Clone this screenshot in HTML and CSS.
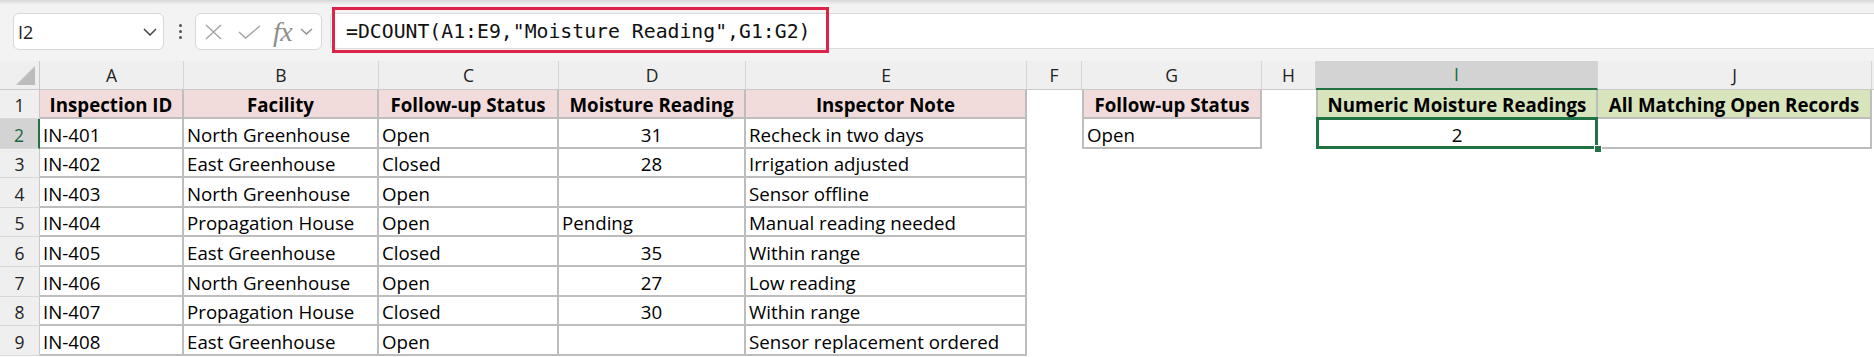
FILE: index.html
```html
<!DOCTYPE html>
<html lang="en">
  <head>
    <meta charset="UTF-8" />
    <meta name="viewport" content="width=device-width, initial-scale=1.0" />
    <title>Inspection log</title>
    <link rel="stylesheet" href="styles.css">
  </head>
  <body>
    <div class="toolbar">
      <div class="nameBox">
        <span>I2</span>
        <svg width="14" height="8" viewBox="0 0 14 8"><polyline points="1,1 7,7 13,1" fill="none" stroke="#444" stroke-width="1.5" /></svg>
      </div>
      <div class="dots"><i></i><i></i><i></i></div>
      <div class="fxBox">
        <svg class="cancel" width="17" height="16" viewBox="0 0 17 16"><path d="M1 1 L16 15 M16 1 L1 15" stroke="#a3a3a3" stroke-width="1.4" /></svg>
        <svg class="enter" width="23" height="14" viewBox="0 0 23 14"><polyline points="1,7 7.5,13 22,1" fill="none" stroke="#a3a3a3" stroke-width="1.4" /></svg>
        <span class="fx">fx</span>
        <svg width="13" height="7" viewBox="0 0 13 7"><polyline points="1,1 6.5,6 12,1" fill="none" stroke="#8f8f8f" stroke-width="1.4" /></svg>
      </div>
      <div class="formula">
        <span>=DCOUNT(A1:E9,"Moisture Reading",G1:G2)</span>
        <div class="callout"></div>
      </div>
    </div>

    <div class="sheet">
      <div class="corner"><svg width="40" height="29" viewBox="0 0 40 29"><polygon points="35,5 35,24 16,24" fill="#bcbcbc" /></svg></div>
      <div class="ch">A</div>
      <div class="ch">B</div>
      <div class="ch">C</div>
      <div class="ch">D</div>
      <div class="ch">E</div>
      <div class="ch">F</div>
      <div class="ch">G</div>
      <div class="ch">H</div>
      <div class="ch sel">I</div>
      <div class="ch">J</div>
      <div class="ch last"></div>

      <div class="rh">1</div>
      <div class="c b hd">Inspection ID</div>
      <div class="c b hd">Facility</div>
      <div class="c b hd">Follow-up Status</div>
      <div class="c b hd">Moisture Reading</div>
      <div class="c b hd">Inspector Note</div>
      <div class="c"></div>
      <div class="c b bl hd">Follow-up Status</div>
      <div class="c"></div>
      <div class="c b bl hd green">Numeric Moisture Readings</div>
      <div class="c b hd green">All Matching Open Records</div>
      <div class="c"></div>

      <div class="rh sel">2</div>
      <div class="c b">IN-401</div>
      <div class="c b">North Greenhouse</div>
      <div class="c b">Open</div>
      <div class="c b num">31</div>
      <div class="c b">Recheck in two days</div>
      <div class="c"></div>
      <div class="c b bl">Open</div>
      <div class="c"></div>
      <div class="c b bl num active">2</div>
      <div class="c b"></div>
      <div class="c"></div>

      <div class="rh">3</div>
      <div class="c b">IN-402</div>
      <div class="c b">East Greenhouse</div>
      <div class="c b">Closed</div>
      <div class="c b num">28</div>
      <div class="c b">Irrigation adjusted</div>
      <div class="c"></div><div class="c"></div><div class="c"></div><div class="c"></div><div class="c"></div><div class="c"></div>

      <div class="rh">4</div>
      <div class="c b">IN-403</div>
      <div class="c b">North Greenhouse</div>
      <div class="c b">Open</div>
      <div class="c b num"></div>
      <div class="c b">Sensor offline</div>
      <div class="c"></div><div class="c"></div><div class="c"></div><div class="c"></div><div class="c"></div><div class="c"></div>

      <div class="rh">5</div>
      <div class="c b">IN-404</div>
      <div class="c b">Propagation House</div>
      <div class="c b">Open</div>
      <div class="c b">Pending</div>
      <div class="c b">Manual reading needed</div>
      <div class="c"></div><div class="c"></div><div class="c"></div><div class="c"></div><div class="c"></div><div class="c"></div>

      <div class="rh">6</div>
      <div class="c b">IN-405</div>
      <div class="c b">East Greenhouse</div>
      <div class="c b">Closed</div>
      <div class="c b num">35</div>
      <div class="c b">Within range</div>
      <div class="c"></div><div class="c"></div><div class="c"></div><div class="c"></div><div class="c"></div><div class="c"></div>

      <div class="rh">7</div>
      <div class="c b">IN-406</div>
      <div class="c b">North Greenhouse</div>
      <div class="c b">Open</div>
      <div class="c b num">27</div>
      <div class="c b">Low reading</div>
      <div class="c"></div><div class="c"></div><div class="c"></div><div class="c"></div><div class="c"></div><div class="c"></div>

      <div class="rh">8</div>
      <div class="c b">IN-407</div>
      <div class="c b">Propagation House</div>
      <div class="c b">Closed</div>
      <div class="c b num">30</div>
      <div class="c b">Within range</div>
      <div class="c"></div><div class="c"></div><div class="c"></div><div class="c"></div><div class="c"></div><div class="c"></div>

      <div class="rh">9</div>
      <div class="c b">IN-408</div>
      <div class="c b">East Greenhouse</div>
      <div class="c b">Open</div>
      <div class="c b num"></div>
      <div class="c b">Sensor replacement ordered</div>
      <div class="c"></div><div class="c"></div><div class="c"></div><div class="c"></div><div class="c"></div><div class="c"></div>
    </div>
  </body>
</html>
```
FILE: styles.css
```css
body {
  margin: 0;
  background: #fff;
  font-family: 'Open Sans', Arial, sans-serif;
  color: #000;
}
.toolbar {
  height: 61px;
  box-sizing: border-box;
  display: flex;
  align-items: flex-start;
  padding: 13px 0 0 13px;
  background: linear-gradient(#d8d8d8, #f3f3f3 5px);
}
.nameBox {
  width: 151px;
  height: 37px;
  box-sizing: border-box;
  display: flex;
  align-items: center;
  justify-content: space-between;
  padding: 0 6px 0 4px;
  background: #fff;
  border: 1px solid #d8d8d8;
  border-radius: 6px;
  font-size: 18px;
  color: #222;
}
.dots {
  display: flex;
  flex-direction: column;
  gap: 3px;
  margin: 11px 13px 0 15px;
  i {
    display: block;
    width: 3px;
    height: 3px;
    border-radius: 50%;
    background: #555;
  }
}
.fxBox {
  width: 127px;
  height: 37px;
  box-sizing: border-box;
  display: flex;
  align-items: center;
  padding-left: 9px;
  background: #fff;
  border: 1px solid #d8d8d8;
  border-radius: 6px;
}
.cancel {
  margin-right: 16px;
}
.enter {
  margin-right: 12px;
}
.fx {
  font-family: 'Liberation Serif', serif;
  font-style: italic;
  font-size: 28px;
  line-height: 26px;
  color: #8e8e8e;
  margin-right: 8px;
  letter-spacing: -0.5px;
}
.formula {
  position: relative;
  flex-grow: 1;
  height: 36px;
  box-sizing: border-box;
  margin-left: 8px;
  padding: 1px 0 0 15px;
  background: #fff;
  border: 1px solid #dcdcdc;
  border-right: none;
  border-radius: 4px 0 0 4px;
  font-family: 'DejaVu Sans Mono', 'Liberation Mono', monospace;
  font-size: 19.8px;
  line-height: 33px;
  color: #111;
}
.callout {
  position: absolute;
  left: 1px;
  top: -7px;
  width: 497px;
  height: 46px;
  box-sizing: border-box;
  border: 3px solid #dc2349;
}
.sheet {
  display: grid;
  grid-template-columns: 40px 144px 195px 180px 187px 281px 55px 180px 54px 282px 274px 1fr;
  grid-template-rows: 29px 29px 30px 29px 30px 29px 30px 30px 29px 30px;
  font-size: 18.7px;
}
.corner,
.ch,
.rh,
.c {
  box-sizing: border-box;
  overflow: hidden;
  white-space: nowrap;
}
.corner {
  background: #efefef;
  border-right: 1px solid #c9c9c9;
  border-bottom: 1px solid #c9c9c9;
}
.ch {
  display: flex;
  align-items: flex-end;
  justify-content: center;
  padding-bottom: 1px;
  line-height: 25px;
  background: #efefef;
  border-right: 1px solid #d5d5d5;
  border-bottom: 1px solid #c9c9c9;
  font-size: 17.5px;
  color: #222;
}
.ch.sel {
  background: #d3d3d3;
  border-bottom: 2px solid #217346;
  color: #1a6a3e;
}
.ch.last {
  border-right: none;
}
.rh {
  display: flex;
  align-items: flex-end;
  justify-content: center;
  line-height: 25px;
  background: #efefef;
  border-right: 1px solid #c9c9c9;
  border-bottom: 1px solid #d8d8d8;
  font-size: 17.5px;
  color: #222;
}
.rh.sel {
  background: #d3d3d3;
  border-right: 2px solid #217346;
  color: #1a6a3e;
}
.c {
  display: flex;
  align-items: flex-end;
  padding: 0 3px;
  line-height: 25px;
}
.b {
  border-right: 2px solid #bdbdbd;
  border-bottom: 2px solid #bdbdbd;
}
.bl {
  border-left: 2px solid #bdbdbd;
}
.hd {
  justify-content: center;
  font-weight: 700;
  background: #f2dcdb;
}
.hd.green {
  background: #d8e4bc;
}
.num {
  justify-content: center;
}
.active {
  position: relative;
  overflow: visible;
  &::before {
    content: "";
    position: absolute;
    inset: -2px -2px -2px -2px;
    border: 3px solid #217346;
  }
  &::after {
    content: "";
    position: absolute;
    right: -6px;
    bottom: -6px;
    width: 6px;
    height: 6px;
    background: #217346;
    border: 1px solid #fff;
  }
}
```
